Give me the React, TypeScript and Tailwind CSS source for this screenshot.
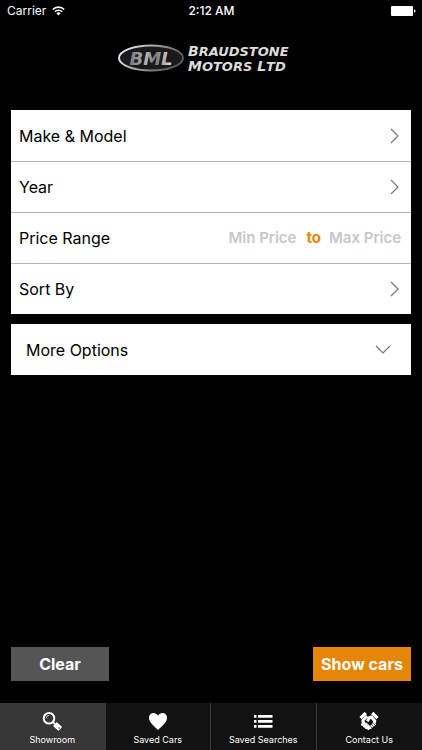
import clsx from 'clsx';
import React from 'react';

const font = "font-['Inter','Liberation_Sans',sans-serif]";

const StatusBar: React.FC = () => (
  <header className="grid h-[22px] grid-cols-3 items-center pr-1.5 pl-[7px] text-[12px] leading-4">
    <div className="flex items-center gap-1.5">
      <span>Carrier</span>
      <svg aria-hidden="true" className="h-[10px] w-[13px]" fill="none" viewBox="0 0 13 10">
        <path d="M.8 3.500a8 8 0 0 1 11.400 0M2.800 5.800a5.200 5.200 0 0 1 7.400 0" stroke="#fff" strokeWidth="1.6" />
        <path d="M4.400 7.300a3 3 0 0 1 4.200 0L6.500 9.500z" fill="#fff" />
      </svg>
    </div>
    <span className="text-center font-medium">2:12 AM</span>
    <svg aria-label="Battery full" className="h-[10px] w-[25px] justify-self-end" role="img" viewBox="0 0 25 10">
      <rect fill="#fff" height="10" rx="1" width="22" />
      <path d="M23 3.5c2 0 2 3 0 3z" fill="#fff" />
    </svg>
  </header>
);

const Logo: React.FC = () => (
  <svg aria-label="Braudstone Motors Ltd" className="h-[36px] w-[174px]" role="img" viewBox="0 0 174 36">
    <defs>
      <linearGradient id="rim" x1="0" x2="1" y1="0" y2="0.3">
        <stop offset="0" stopColor="#f4f4f4" />
        <stop offset="0.5" stopColor="#a8a8a8" />
        <stop offset="1" stopColor="#5a5a5a" />
      </linearGradient>
      <linearGradient id="letters" x1="0" x2="1" y1="0" y2="0">
        <stop offset="0" stopColor="#777" />
        <stop offset="0.4" stopColor="#b4b4b4" />
        <stop offset="0.6" stopColor="#777" />
        <stop offset="1" stopColor="#e8e8e8" />
      </linearGradient>
    </defs>
    <ellipse cx="33" cy="18" fill="#1b191c" rx="32" ry="12.5" stroke="url(#rim)" strokeWidth="2" />
    <text
      className="font-['DejaVu_Sans',sans-serif] text-[18px] font-bold italic"
      fill="url(#letters)"
      textAnchor="middle"
      x="33"
      y="25"
    >
      BML
    </text>
    <g className="font-['DejaVu_Sans',sans-serif] text-[14px] font-bold italic" fill="#dcdcdc">
      <text x="70" y="16">
        B<tspan className="text-[13px]">RAUDSTONE</tspan>
      </text>
      <text x="70" y="31">
        M<tspan className="text-[13px]">OTORS</tspan> L<tspan className="text-[13px]">TD</tspan>
      </text>
    </g>
  </svg>
);

const Chevron: React.FC<{ down?: boolean }> = ({ down }) => (
  <svg
    aria-hidden="true"
    className={clsx('h-4 w-4', down && 'rotate-90')}
    fill="none"
    stroke="#777"
    strokeWidth="1.2"
    viewBox="0 0 16 16"
  >
    <path d="m4 1 7 7-7 7" />
  </svg>
);

const FilterRow: React.FC<{ label: string }> = ({ label }) => (
  <button
    className="flex h-[51px] w-full items-center justify-between border-t border-[#b4b4b4] px-2 text-left first:border-white"
    type="button"
  >
    <span>{label}</span>
    <Chevron />
  </button>
);

const priceClassName = 'text-[15px] font-semibold outline-none placeholder:text-[#c7c7cd]';

const PriceRow: React.FC = () => (
  <div className="flex h-[51px] items-center justify-between border-t border-[#b4b4b4] pr-1.5 pl-2">
    <span>Price Range</span>
    <div className="flex items-center gap-2 text-[15px] font-semibold">
      <input aria-label="Minimum price" className={clsx(priceClassName, 'w-[70px]')} placeholder="Min Price" />
      <span className="font-bold text-[#e58606]">to</span>
      <input aria-label="Maximum price" className={clsx(priceClassName, 'w-[76px]')} placeholder="Max Price" />
    </div>
  </div>
);

const SearchIcon = () => (
  <svg aria-hidden="true" className="h-5 w-5" viewBox="0 0 20 20">
    <circle cx="7" cy="7.2" fill="none" r="5.3" stroke="#fff" strokeWidth="2" />
    <path d="M4.200 7.200A2.800 2.800 0 0 1 7 4.400" fill="none" stroke="#ddd" strokeWidth="0.9" />
    <path d="m10.800 11 2.400 2.400" stroke="#fff" strokeWidth="1.8" />
    <rect fill="#fff" height="5.4" rx="1" transform="rotate(42 15.6 15.5)" width="7.4" x="11.9" y="12.8" />
    <circle cx="17.2" cy="17" fill="#363636" r="0.7" />
  </svg>
);

const HeartIcon = () => (
  <svg aria-hidden="true" className="h-5 w-5" viewBox="0 0 20 20">
    <path d="M10 19C7 16 1 11.500 1 7C1 1.500 7.500.500 10 4.700C12.500.500 19 1.500 19 7C19 11.500 13 16 10 19z" fill="#fff" />
  </svg>
);

const ListIcon = () => (
  <svg aria-hidden="true" className="h-5 w-5" fill="#fff" viewBox="0 0 20 20">
    <path d="M1 4h2.500v2.700H1zM1 9h2.500v2.700H1zM1 14h2.500v2.700H1z" />
    <path d="M5 4h14.500v2.700H5zM5 9h14.500v2.700H5zM5 14h14.500v2.700H5z" />
  </svg>
);

const HandshakeIcon = () => (
  <svg aria-hidden="true" className="h-5 w-5" fill="none" stroke="#fff" viewBox="0 0 20 20">
    {/* cuffs */}
    <path d="M1.500 7.200 6.800 2M13.200 2l5.300 5.200" strokeWidth="3.200" />
    {/* palms */}
    <path d="m8 5-4.200 4.500.4 3.500" strokeWidth="2.800" />
    <path d="M8.400 10.400 10 7l2.400-1 3.400 4-.6 2" strokeLinejoin="round" strokeWidth="3" />
    {/* fingers */}
    <path d="m3.200 13.600 2-2M5.200 15.400l2.200-2.400M7.200 16.900l2-2.200M9.400 17.800l1.200-1.400" strokeLinecap="round" strokeWidth="2.500" />
    <path d="m10.600 17 5.600-4.800" strokeDasharray="1.6 0.5" strokeWidth="3.200" />
  </svg>
);

const tabs = [
  { icon: SearchIcon, label: 'Showroom' },
  { icon: HeartIcon, label: 'Saved Cars' },
  { icon: ListIcon, label: 'Saved Searches' },
  { icon: HandshakeIcon, label: 'Contact Us' },
];

const App: React.FC = () => (
  <div className={clsx(font, 'flex min-h-screen flex-col bg-black text-white')}>
    <StatusBar />
    <div className="flex justify-center pt-[18px] pr-3 pb-[34px]">
      <Logo />
    </div>
    <main className="flex flex-1 flex-col px-[11px] text-[16px] leading-6">
      <section className="bg-white text-black">
        <FilterRow label="Make & Model" />
        <FilterRow label="Year" />
        <PriceRow />
        <FilterRow label="Sort By" />
      </section>
      <button
        aria-expanded="false"
        className="mt-2.5 flex h-[51px] w-full items-center justify-between bg-white pr-5 pl-[15px] text-left text-black"
        type="button"
      >
        <span>More Options</span>
        <Chevron down />
      </button>
      <div className="mt-auto flex justify-between pt-6 pb-[22px] font-bold">
        <button className="h-[34px] w-[98px] bg-[#555]" type="button">
          Clear
        </button>
        <button className="h-[34px] w-[98px] bg-[#e58606]" type="button">
          Show cars
        </button>
      </div>
    </main>
    <nav className="grid h-[47px] grid-cols-4 divide-x divide-[#3a3a3a] bg-[#121212]">
      {tabs.map(({ icon: Icon, label }, index) => (
        <button
          className={clsx('flex flex-col items-center gap-0.5 pt-2 text-[9px] leading-[14px]', index === 0 && 'bg-[#363636]')}
          key={label}
          type="button"
        >
          <Icon />
          <span>{label}</span>
        </button>
      ))}
    </nav>
  </div>
);

export default App;
